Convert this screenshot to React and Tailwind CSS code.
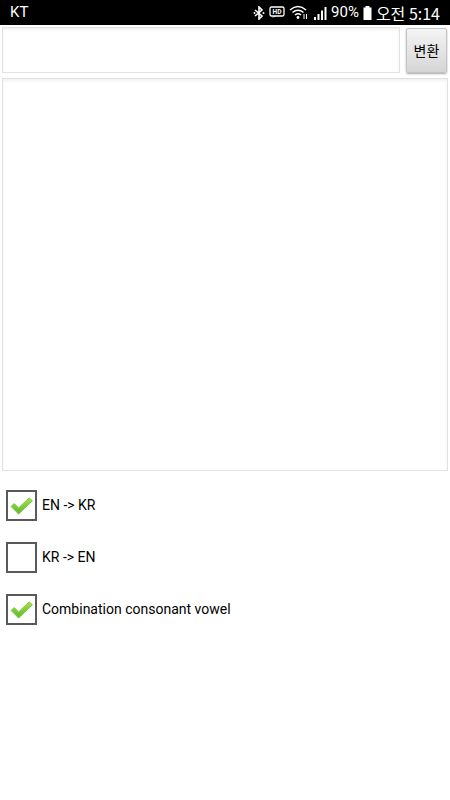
import React from "react";

function Check() {
  return (
    <svg width="25" height="21" viewBox="0 0 26 22" className="block">
      <defs>
        <linearGradient id="g" x1="0" y1="0" x2="0" y2="1">
          <stop offset="0" stopColor="#a6e34a" />
          <stop offset="1" stopColor="#5cb82a" />
        </linearGradient>
      </defs>
      <path d="M2 12 L5.5 9 L10 13.5 L21 3 L24.5 6 L10 20 Z" fill="url(#g)" stroke="#6cbf34" strokeWidth="0.8" strokeLinejoin="round" />
    </svg>
  );
}

function Box({ checked, label }) {
  return (
    <div className="flex items-center h-[52px]">
      <div className="w-[31px] h-[31px] ml-[6px] border-2 border-[#5a5a5a] bg-white flex items-center justify-center">
        {checked && <Check />}
      </div>
      <span className="ml-[5px] text-[14px] text-black" style={{ fontFamily: "Roboto, 'Noto Sans', sans-serif" }}>{label}</span>
    </div>
  );
}

export default function App() {
  return (
    <div className="w-[450px] h-[800px] bg-white flex flex-col" style={{ fontFamily: "Roboto, 'Noto Sans CJK KR', sans-serif" }}>
      <div className="h-[25px] bg-black text-white flex items-center justify-between px-[10px] text-[15px]">
        <span>KT</span>
        <div className="flex items-center gap-[4px]">
          <svg width="12" height="14" viewBox="0 0 12 14"><path d="M2 4 L9 10 L6 13 L6 1 L9 4 L2 10" stroke="white" strokeWidth="1.6" fill="none" /><circle cx="1.5" cy="7" r="1" fill="white"/><circle cx="10.5" cy="7" r="1" fill="white"/></svg>
          <svg width="16" height="13" viewBox="0 0 16 13"><rect x="1" y="1" width="14" height="9" rx="1.5" stroke="white" strokeWidth="1.3" fill="none"/><path d="M3 12 L5 10 L7 10 Z" fill="white"/><text x="8" y="8.3" fontSize="6.5" fill="white" textAnchor="middle" fontWeight="bold" fontFamily="Roboto">HD</text></svg>
          <svg width="20" height="15" viewBox="0 0 20 15"><path d="M1 5 Q9 -2 17 5 M3.5 7.5 Q9 3 14.5 7.5 M6 10 Q9 7.5 12 10" stroke="white" strokeWidth="1.6" fill="none"/><circle cx="9" cy="12.5" r="1.4" fill="white"/><path d="M15 9 L15 14 M17.5 9 L17.5 14" stroke="white" strokeWidth="1"/></svg>
          <svg width="14" height="14" viewBox="0 0 14 14"><rect x="1" y="11" width="2" height="3" fill="white"/><rect x="4.5" y="8" width="2" height="6" fill="white"/><rect x="8" y="4.5" width="2" height="9.5" fill="white"/><rect x="11.5" y="1" width="2" height="13" fill="white"/></svg>
          <span className="text-[15px]">90%</span>
          <svg width="9" height="14" viewBox="0 0 9 14"><rect x="2.5" y="0" width="4" height="2" fill="white"/><rect x="0.5" y="1.5" width="8" height="12.5" fill="white"/></svg>
          <span className="text-[16px]" style={{ fontFamily: "'Noto Sans CJK KR', Roboto, sans-serif" }}>오전 5:14</span>
        </div>
      </div>
      <div className="flex items-start mt-[2px]">
        <div className="ml-[2px] w-[398px] h-[46px] border border-[#e2e2e2] bg-white shadow-[inset_0_2px_3px_rgba(0,0,0,0.06)]" />
        <button className="ml-[6px] mt-[1px] w-[41px] h-[45px] border border-[#c4c4c4] rounded-[2px] bg-gradient-to-b from-[#f4f4f4] to-[#d6d6d6] shadow-[0_1px_2px_rgba(0,0,0,0.35)] text-[14px] text-black" style={{ fontFamily: "'Noto Sans CJK KR', sans-serif" }}>
          변환
        </button>
      </div>
      <div className="ml-[2px] mt-[5px] w-[446px] h-[393px] border border-[#e2e2e2] bg-white shadow-[inset_0_2px_3px_rgba(0,0,0,0.06)]" />
      <div className="mt-[8px] flex flex-col">
        <Box checked label="EN -> KR" />
        <Box label="KR -> EN" />
        <Box checked label="Combination consonant vowel" />
      </div>
    </div>
  );
}
